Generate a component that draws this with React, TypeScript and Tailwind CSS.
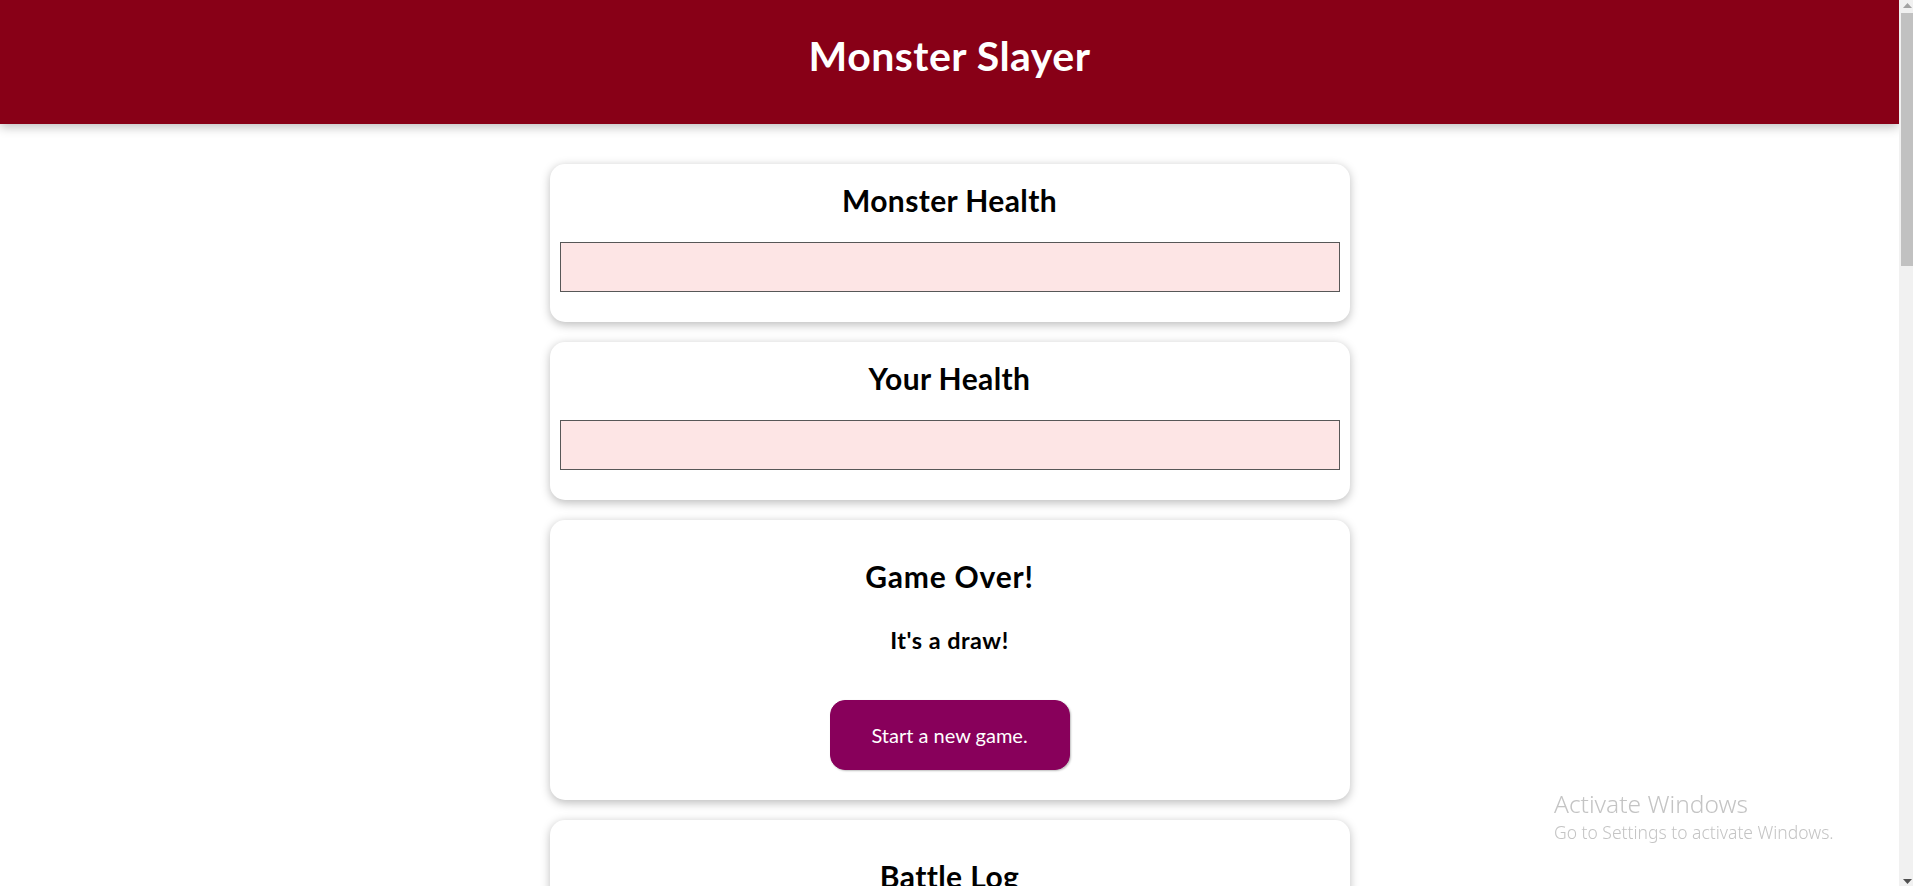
const font = "font-['Lato','Noto_Sans',sans-serif]";

const cardClass =
	"mx-auto w-[800px] rounded-[15px] bg-white px-[10px] pt-[10px] pb-[10px] text-center shadow-[0_2.5px_10px_rgba(0,0,0,0.26)]";

const HealthCard = ({ title }: { title: string }) => (
	<div className={`${cardClass} mb-5`}>
		<h2 className="mt-[5px] text-[30px] leading-[43px] font-bold tracking-[0.4px] text-black">{title}</h2>
		<div className="my-5 h-[50px] w-full border border-[#575757] bg-[#fde5e5]">
			<div className="h-full w-0 bg-[#00a876]" />
		</div>
	</div>
);

const Scrollbar = () => (
	<div className="pointer-events-none fixed top-0 right-0 bottom-0 flex w-[14px] flex-col items-end bg-[#f1f1f1]">
		<svg className="mt-[3px] mr-[1px]" width="9" height="5" viewBox="0 0 9 5">
			<path d="M4.5 0 L9 5 L0 5 Z" fill="#a3a3a3" />
		</svg>
		<div className="mt-[5px] h-[253px] w-[12px] bg-[#c1c1c1]" />
		<div className="flex-1" />
		<svg className="mr-[1px] mb-[2px]" width="9" height="5" viewBox="0 0 9 5">
			<path d="M0 0 L9 0 L4.5 5 Z" fill="#505050" />
		</svg>
	</div>
);

export default function App() {
	return (
		<div className={`min-h-screen w-[calc(100%-14px)] bg-white ${font}`}>
			<header className="h-[124px] bg-[#880017] pt-[31px] text-center text-white shadow-[0_2.5px_10px_rgba(0,0,0,0.26)]">
				<h1 className="text-[41px] leading-[50px] font-bold tracking-[0.5px]">Monster Slayer</h1>
			</header>

			<main className="pt-10 pb-10">
				<HealthCard title="Monster Health" />
				<HealthCard title="Your Health" />

				<div className={`${cardClass} mb-5`}>
					<h2 className="mt-[25px] text-[30px] leading-[43px] font-bold tracking-[0.8px] text-black">Game Over!</h2>
					<h3 className="mt-[25px] text-[23.4px] leading-[34px] font-bold tracking-[0.5px] text-black">It's a draw!</h3>
					<button className="mt-[43px] mb-5 h-[70px] w-[240px] rounded-[15px] border border-[#88005b] bg-[#88005b] text-[20px] text-white shadow-[1px_1px_2px_rgba(0,0,0,0.26)]">
						Start a new game.
					</button>
				</div>

				<div className={cardClass}>
					<h2 className="mt-[25px] mb-[25px] text-[30px] leading-[43px] font-bold tracking-[0.4px] text-black">Battle Log</h2>
					<ul className="my-5 h-[20px]" />
				</div>
			</main>

			<div className="pointer-events-none fixed top-[788px] left-[1554px] font-['Noto_Sans',sans-serif] text-[#c4c4c4]">
				<p className="text-[24.5px] leading-[32px] font-light">Activate Windows</p>
				<p className="text-[17.5px] leading-[25px] font-light">Go to Settings to activate Windows.</p>
			</div>

			<Scrollbar />
		</div>
	);
}
